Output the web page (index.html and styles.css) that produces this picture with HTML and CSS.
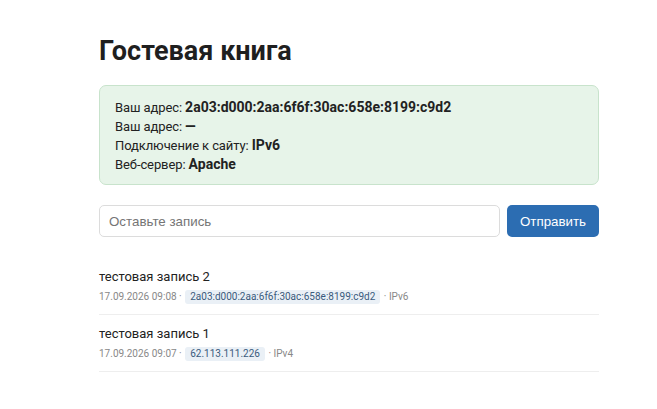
FILE: index.html
```html
<!DOCTYPE html>
<html lang="ru">
<head>
    <meta charset="UTF-8">
    <meta name="viewport" content="width=device-width, initial-scale=1.0">
    <title>Гостевая книга</title>
    <link rel="stylesheet" href="styles.css">
</head>
<body>
    <div class="container">
        <h1 class="title">Гостевая книга</h1>

        <div class="info">
            <div class="info-line">Ваш адрес: <b>2a03:d000:2aa:6f6f:30ac:658e:8199:c9d2</b></div>
            <div class="info-line">Ваш адрес: <b>—</b></div>
            <div class="info-line">Подключение к сайту: <b>IPv6</b></div>
            <div class="info-line">Веб-сервер: <b>Apache</b></div>
        </div>

        <form class="entry-form">
            <input class="entry-input" type="text" placeholder="Оставьте запись">
            <button class="entry-btn" type="button">Отправить</button>
        </form>

        <div class="entries">
            <div class="entry">
                <div class="entry-text">тестовая запись 2</div>
                <div class="entry-meta">17.09.2026 09:08 · <span class="ip">2a03:d000:2aa:6f6f:30ac:658e:8199:c9d2</span> · IPv6</div>
            </div>
            <div class="entry">
                <div class="entry-text">тестовая запись 1</div>
                <div class="entry-meta">17.09.2026 09:07 · <span class="ip">62.113.111.226</span> · IPv4</div>
            </div>
        </div>
    </div>
</body>
</html>
```

FILE: styles.css
```css
* {
    margin: 0;
    padding: 0;
    box-sizing: border-box;
}

body {
    font-family: Roboto, 'Noto Sans', sans-serif;
    background: #fff;
    color: #222;
}

.container {
    width: 500px;
    margin-left: 99px;
    padding-top: 34px;
}

.title {
    font-size: 27px;
    font-weight: 700;
    color: #1f1f1f;
    line-height: 34px;
    margin-bottom: 17px;
}

/* Info box */
.info {
    background: #e7f4e9;
    border: 1px solid #c8e3cc;
    border-radius: 7px;
    padding: 12px 15px 10px;
    font-size: 13px;
    letter-spacing: -0.1px;
    color: #222;
}

.info-line {
    line-height: 19px;
}

.info-line b {
    font-size: 14px;
    font-weight: 700;
    letter-spacing: 0;
}

/* Form */
.entry-form {
    display: flex;
    gap: 7px;
    margin-top: 20px;
}

.entry-input {
    flex: 1;
    height: 32px;
    border: 1px solid #dcdcdc;
    border-radius: 5px;
    padding: 0 9px;
    font-family: 'Liberation Sans', Arial, sans-serif;
    font-size: 13.33px;
    color: #222;
}

.entry-input::placeholder {
    color: #757575;
}

.entry-btn {
    width: 92px;
    height: 32px;
    border: none;
    border-radius: 5px;
    background: #2c6db2;
    color: #fff;
    font-family: 'Liberation Sans', Arial, sans-serif;
    font-size: 13.33px;
}

/* Entries */
.entries {
    margin-top: 21px;
}

.entry {
    padding: 9px 0 7px;
    border-bottom: 1px solid #eee;
}

.entry-text {
    font-size: 13px;
    line-height: 20px;
    color: #222;
}

.entry-meta {
    font-size: 10px;
    line-height: 20px;
    color: #888;
}

.ip {
    display: inline-block;
    background: #eaf0f6;
    color: #3a5b7d;
    border-radius: 3px;
    padding: 0 5px;
    margin: 0 1px;
    line-height: 14px;
}
```
